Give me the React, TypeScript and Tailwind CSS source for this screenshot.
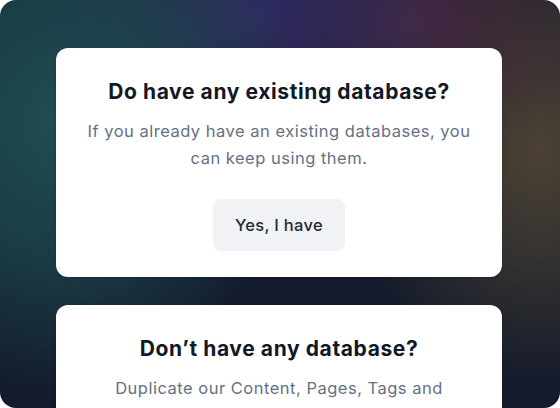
import React from "react";

export default function App() {
  return (
    <div className="w-[560px] h-[408px] bg-white">
      <div
        className="relative w-[560px] h-[408px] rounded-2xl overflow-hidden bg-[#131a2b] bg-[radial-gradient(ellipse_240px_280px_at_60px_120px,#1f4d52_0%,rgba(31,77,82,0.65)_50%,transparent_100%),radial-gradient(ellipse_220px_170px_at_260px_10px,#2f2a62_0%,rgba(47,42,98,0.5)_50%,transparent_100%),radial-gradient(ellipse_180px_140px_at_410px_20px,#47283c_0%,rgba(71,40,60,0.5)_50%,transparent_100%),radial-gradient(ellipse_200px_240px_at_540px_150px,#4b4234_0%,rgba(75,66,52,0.6)_45%,transparent_100%)]"
        style={{ fontFamily: "Inter, 'Noto Sans', sans-serif" }}
      >
        <div className="flex flex-col gap-7 pt-12 pl-14">
          <div className="w-[446px] bg-white rounded-xl flex flex-col items-center text-center pt-[30px] pb-[26px] shadow-sm">
            <h2 className="text-[21px] leading-7 font-bold text-[#111827] tracking-[0.6px]">
              Do have any existing database?
            </h2>
            <p className="mt-3 text-[16.5px] leading-[27px] text-[#667085] tracking-[0.5px]">
              If you already have an existing databases, you
              <br />
              can keep using them.
            </p>
            <button className="mt-[27px] w-[132px] py-[14px] leading-6 rounded-lg bg-[#f1f2f6] text-[16.5px] font-medium text-[#1e293b] tracking-[0.3px]">
              Yes, I have
            </button>
          </div>
          <div className="w-[446px] bg-white rounded-xl flex flex-col items-center text-center pt-[30px] pb-[26px] shadow-sm">
            <h2 className="text-[21px] leading-7 font-bold text-[#111827] tracking-[0.6px]">
              Don’t have any database?
            </h2>
            <p className="mt-3 text-[16.5px] leading-[27px] text-[#667085] tracking-[0.5px]">
              Duplicate our Content, Pages, Tags and
              <br />
              Settings to start with sample data.
            </p>
            <button className="mt-[27px] w-[132px] py-[14px] leading-6 rounded-lg bg-[#f1f2f6] text-[16.5px] font-medium text-[#1e293b] tracking-[0.3px]">
              Duplicate
            </button>
          </div>
        </div>
      </div>
    </div>
  );
}
